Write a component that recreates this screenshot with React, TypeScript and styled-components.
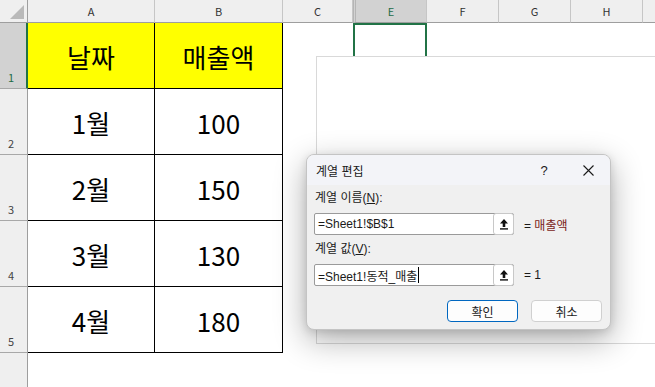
import React from 'react';
import styled, { createGlobalStyle, css } from 'styled-components';

const GlobalStyle = createGlobalStyle`
  html, body {
    margin: 0;
    padding: 0;
    background: #ffffff;
  }
  * {
    box-sizing: border-box;
  }
`;

const uiFont = `"Noto Sans CJK KR", "Noto Sans", sans-serif`;
const dialogFont = `"Liberation Sans", "Noto Sans CJK KR", sans-serif`;

const Page = styled.div`
  position: relative;
  width: 655px;
  height: 387px;
  overflow: hidden;
  background: #ffffff;
  font-family: ${uiFont};
`;

const Grid = styled.div`
  display: grid;
  grid-template-columns: 28px 127px 128px 70px 74px 72px 72px 72px 72px;
  grid-template-rows: 23px repeat(5, 66px) 66px;
  width: max-content;
`;

const Corner = styled.div`
  position: relative;
  background: #efefef;
  border-right: 1px solid #9e9e9e;
  border-bottom: 1px solid #9e9e9e;

  &::after {
    content: '';
    position: absolute;
    right: 3px;
    bottom: 3px;
    width: 0;
    height: 0;
    border-left: 14px solid transparent;
    border-bottom: 14px solid #b9b9b9;
  }
`;

const ColHead = styled.div<{ $selected?: boolean; $hiddenBefore?: boolean }>`
  display: flex;
  align-items: center;
  justify-content: center;
  background: ${(p) => (p.$selected ? '#d2d2d2' : '#efefef')};
  color: ${(p) => (p.$selected ? '#1d6b48' : '#333333')};
  border-right: 1px solid #c6c6c6;
  border-bottom: 1px solid #9e9e9e;
  font-size: 11px;
  ${(p) =>
    p.$hiddenBefore &&
    css`
      border-left: 3px double #b5b5b5;
    `}
`;

const RowHead = styled.div<{ $selected?: boolean }>`
  display: flex;
  align-items: flex-end;
  padding: 0 0 4px 8px;
  background: ${(p) => (p.$selected ? '#d2d2d2' : '#efefef')};
  color: ${(p) => (p.$selected ? '#1d6b48' : '#444444')};
  border-right: ${(p) => (p.$selected ? '2px solid #217346' : '1px solid #9e9e9e')};
  border-bottom: 1px solid #a8a8a8;
  font-size: 11px;
  line-height: 13px;
`;

const Cell = styled.div<{ $fill?: string; $boxed?: boolean; $active?: boolean }>`
  display: flex;
  align-items: center;
  justify-content: center;
  background: ${(p) => p.$fill || '#ffffff'};
  font-size: 26px;
  color: #000000;
  padding-top: 2px;
  ${(p) =>
    p.$boxed &&
    css`
      border-right: 1px solid #000000;
      border-bottom: 1px solid #000000;
    `}
  ${(p) =>
    p.$active &&
    css`
      box-shadow: inset 0 0 0 2px #217346;
    `}
`;

const ChartArea = styled.div`
  position: absolute;
  left: 316px;
  top: 56px;
  width: 400px;
  height: 288px;
  background: #ffffff;
  border: 1px solid #d9d9d9;
`;

const Dialog = styled.div`
  position: absolute;
  left: 306px;
  top: 154px;
  width: 305px;
  height: 176px;
  display: flex;
  flex-direction: column;
  background: #f0f0f0;
  border: 1px solid #c4c4c4;
  border-radius: 8px;
  overflow: hidden;
  box-shadow: 0 10px 32px rgba(0, 0, 0, 0.32), 0 2px 8px rgba(0, 0, 0, 0.12);
  color: #1a1a1a;
  font-family: ${dialogFont};
  font-size: 12px;
`;

const TitleBar = styled.div`
  height: 30px;
  display: flex;
  align-items: center;
  padding: 0 0 0 9px;
  background: #f3f4f8;
  font-size: 12px;
`;

const Title = styled.div`
  flex: 1;
`;

const TitleButton = styled.div`
  width: 44px;
  height: 30px;
  display: flex;
  align-items: center;
  justify-content: center;
  font-size: 13px;
  color: #1a1a1a;
`;

const Body = styled.div`
  display: flex;
  flex-direction: column;
  padding: 5px 8px 0 7px;
`;

const Label = styled.div<{ $gap?: number }>`
  height: 16px;
  line-height: 16px;
  padding-left: 1px;
  margin-top: ${(p) => p.$gap || 0}px;
  margin-bottom: 7px;
`;

const FieldRow = styled.div`
  display: flex;
  align-items: center;
`;

const Field = styled.div`
  width: 200px;
  height: 22px;
  display: flex;
  align-items: center;
  background: #ffffff;
  border: 1px solid #9a9a9a;
  border-radius: 2px;
`;

const FieldText = styled.div`
  flex: 1;
  padding-left: 3px;
  font-size: 12px;
  white-space: nowrap;
  display: flex;
  align-items: center;
`;

const Caret = styled.span`
  display: inline-block;
  width: 1px;
  height: 16px;
  margin-left: 1px;
  background: #000000;
`;

const RefButton = styled.div`
  width: 21px;
  height: 22px;
  margin: -1px -1px -1px 0;
  display: flex;
  align-items: center;
  justify-content: center;
  background: #ffffff;
  border: 1px solid #c8c8c8;
  border-radius: 3px;
`;

const Result = styled.div<{ $tone?: string }>`
  margin-left: 10px;
  white-space: nowrap;
  color: #1a1a1a;

  span {
    color: ${(p) => p.$tone || '#1a1a1a'};
  }
`;

const Buttons = styled.div`
  display: flex;
  justify-content: flex-end;
  gap: 13px;
  margin-top: 14px;
`;

const Button = styled.div<{ $primary?: boolean }>`
  width: 71px;
  height: 22px;
  display: flex;
  align-items: center;
  justify-content: center;
  background: #fdfdfd;
  border: 1px solid ${(p) => (p.$primary ? '#0067c0' : '#d0d0d0')};
  border-radius: 4px;
  font-size: 12px;
`;

function RefIcon() {
  return (
    <svg width="10" height="12" viewBox="0 0 10 12">
      <path d="M5 1 L9 5.5 H6.3 V9 H3.7 V5.5 H1 Z" fill="#111111" />
      <rect x="1" y="10.2" width="8" height="1.4" fill="#111111" />
    </svg>
  );
}

function CloseIcon() {
  return (
    <svg width="11" height="11" viewBox="0 0 11 11">
      <path d="M0.5 0.5 L10.5 10.5 M10.5 0.5 L0.5 10.5" stroke="#1a1a1a" strokeWidth="1.1" />
    </svg>
  );
}

// column D is hidden, the last column runs off the right edge
const columns = ['A', 'B', 'C', 'E', 'F', 'G', 'H', ''];

const data: [string, string][] = [
  ['날짜', '매출액'],
  ['1월', '100'],
  ['2월', '150'],
  ['3월', '130'],
  ['4월', '180'],
];

export default function App() {
  const rows = [1, 2, 3, 4, 5, 6];

  return (
    <Page>
      <GlobalStyle />
      <Grid>
        <Corner />
        {columns.map((c, i) => (
          <ColHead key={i} $selected={c === 'E'} $hiddenBefore={c === 'E'}>
            {c}
          </ColHead>
        ))}
        {rows.map((r) => {
          const values = data[r - 1];
          return (
            <React.Fragment key={r}>
              <RowHead $selected={r === 1}>{r <= 5 ? r : ''}</RowHead>
              {columns.map((c, i) => {
                const inTable = values && i < 2;
                return (
                  <Cell
                    key={i}
                    $boxed={!!inTable}
                    $fill={inTable && r === 1 ? '#ffff00' : undefined}
                    $active={r === 1 && c === 'E'}
                  >
                    {inTable ? values[i] : ''}
                  </Cell>
                );
              })}
            </React.Fragment>
          );
        })}
      </Grid>

      <ChartArea />

      <Dialog>
        <TitleBar>
          <Title>계열 편집</Title>
          <TitleButton>?</TitleButton>
          <TitleButton>
            <CloseIcon />
          </TitleButton>
        </TitleBar>
        <Body>
          <Label>
            계열 이름(<u>N</u>):
          </Label>
          <FieldRow>
            <Field>
              <FieldText>=Sheet1!$B$1</FieldText>
              <RefButton>
                <RefIcon />
              </RefButton>
            </Field>
            <Result $tone="#7b2418">
              = <span>매출액</span>
            </Result>
          </FieldRow>
          <Label $gap={6}>
            계열 값(<u>V</u>):
          </Label>
          <FieldRow>
            <Field>
              <FieldText>
                =Sheet1!동적_매출
                <Caret />
              </FieldText>
              <RefButton>
                <RefIcon />
              </RefButton>
            </Field>
            <Result>= 1</Result>
          </FieldRow>
          <Buttons>
            <Button $primary>확인</Button>
            <Button>취소</Button>
          </Buttons>
        </Body>
      </Dialog>
    </Page>
  );
}
